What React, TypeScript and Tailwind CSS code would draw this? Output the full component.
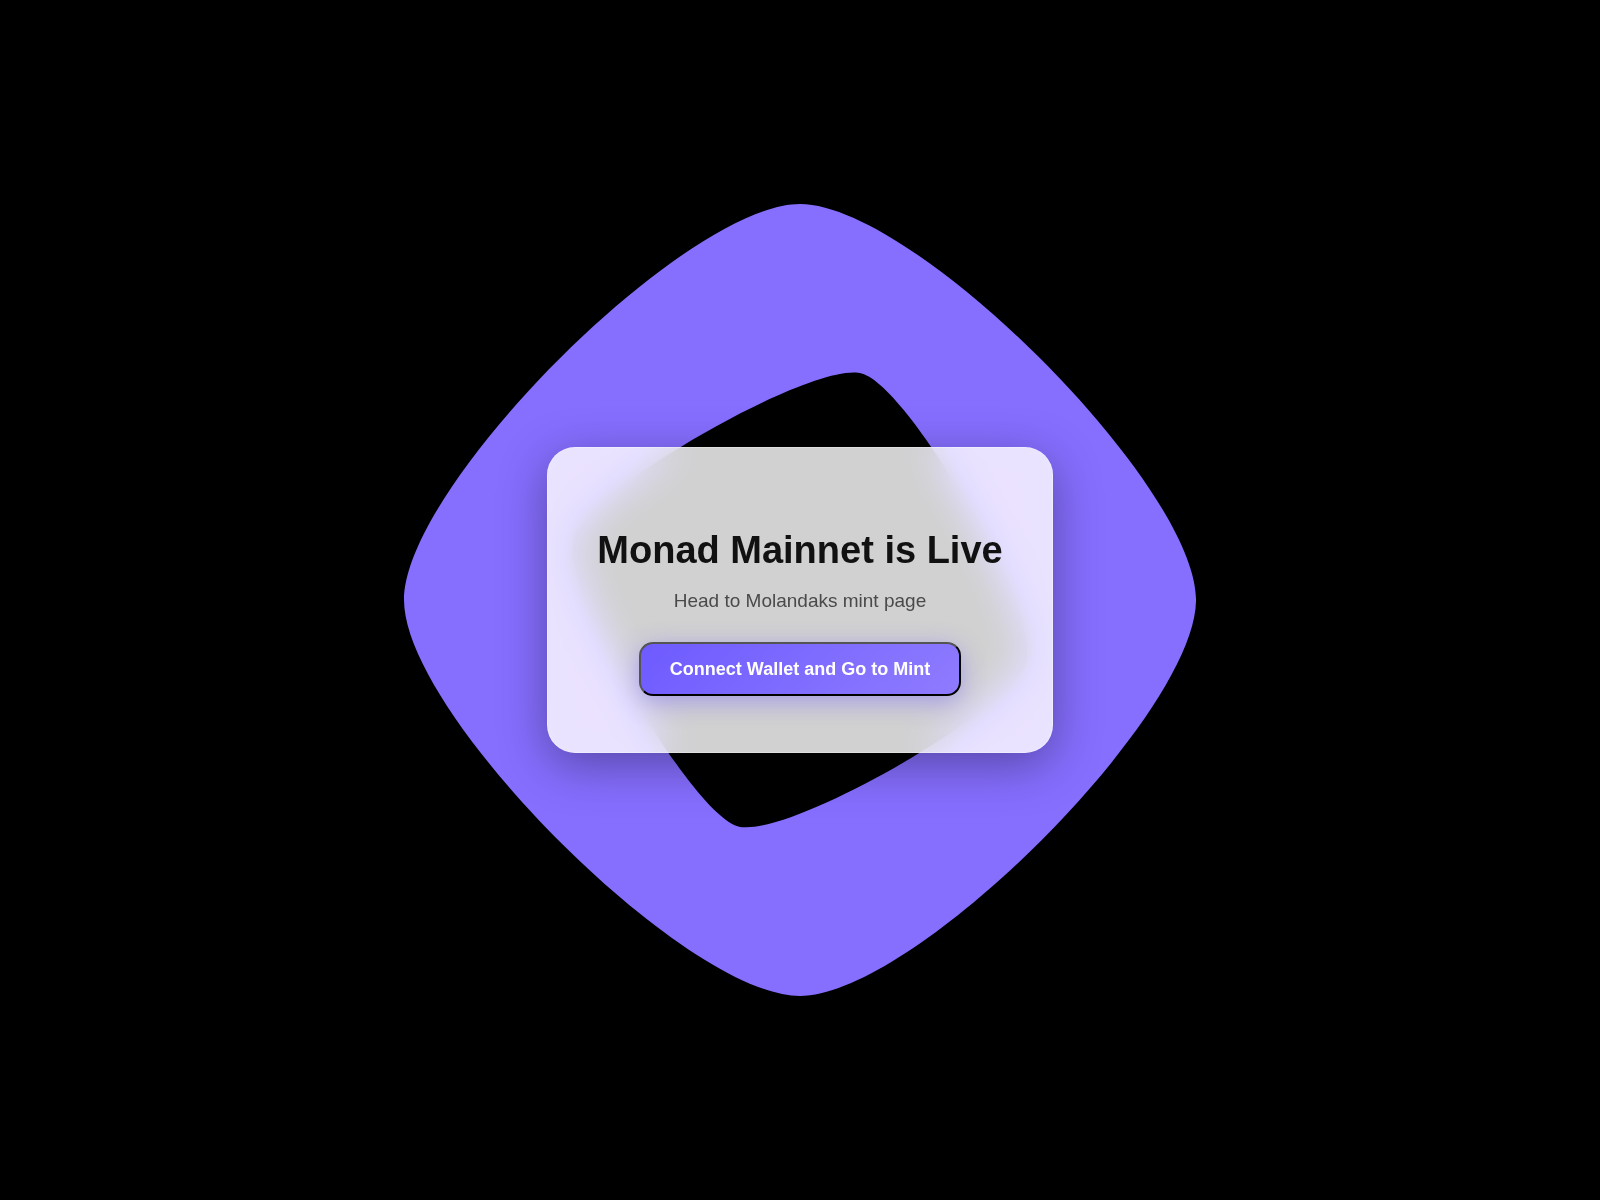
import React from 'react'

function MonadLogo() {
    return (
        <svg viewBox="0 0 181.07 181.07" className="col-start-1 row-start-1 w-[66vmin]" aria-hidden="true">
            <path
                className="fill-[#866eff]"
                d="M90.5358 0C64.3911 0 0 64.3902 0 90.5339C0 116.678 64.3911 181.069 90.5358 181.069C116.681 181.069 181.073 116.677 181.073 90.5339C181.073 64.3909 116.682 0 90.5358 0ZM76.4273 142.303C65.4024 139.299 35.7608 87.4491 38.7652 76.4245C41.7697 65.3998 93.62 35.7593 104.645 38.7637C115.67 41.7677 145.312 93.6174 142.307 104.642C139.303 115.667 87.4522 145.308 76.4273 142.303Z"
            />
        </svg>
    )
}

export default function App() {
    return (
        <main className="grid min-h-screen place-items-center bg-black font-['Liberation_Sans',Arial,sans-serif]">
            <MonadLogo />
            <section className="z-10 col-start-1 row-start-1 flex flex-col items-center rounded-[28px] border border-white/30 bg-white/82 px-[49px] pt-20 pb-14 text-center shadow-[0_12px_48px_rgba(0,0,0,0.35)] backdrop-blur-[20px] backdrop-saturate-180">
                <h1 className="text-[38px] leading-[44px] font-bold text-[#111111]">Monad Mainnet is Live</h1>
                <p className="mt-[18px] text-[19px] leading-[22px] text-[#4a4a4a]">Head to Molandaks mint page</p>
                <button
                    type="button"
                    className="mt-[30px] cursor-pointer rounded-[14px] border-2 border-black bg-linear-135 from-[#6e5aff] to-[#8f7bff] px-[29px] py-[15px] text-[18px] leading-5 font-bold text-white shadow-[0_6px_24px_rgba(110,90,255,0.45)] [border-style:outset]"
                >
                    Connect Wallet and Go to Mint
                </button>
            </section>
        </main>
    )
}
